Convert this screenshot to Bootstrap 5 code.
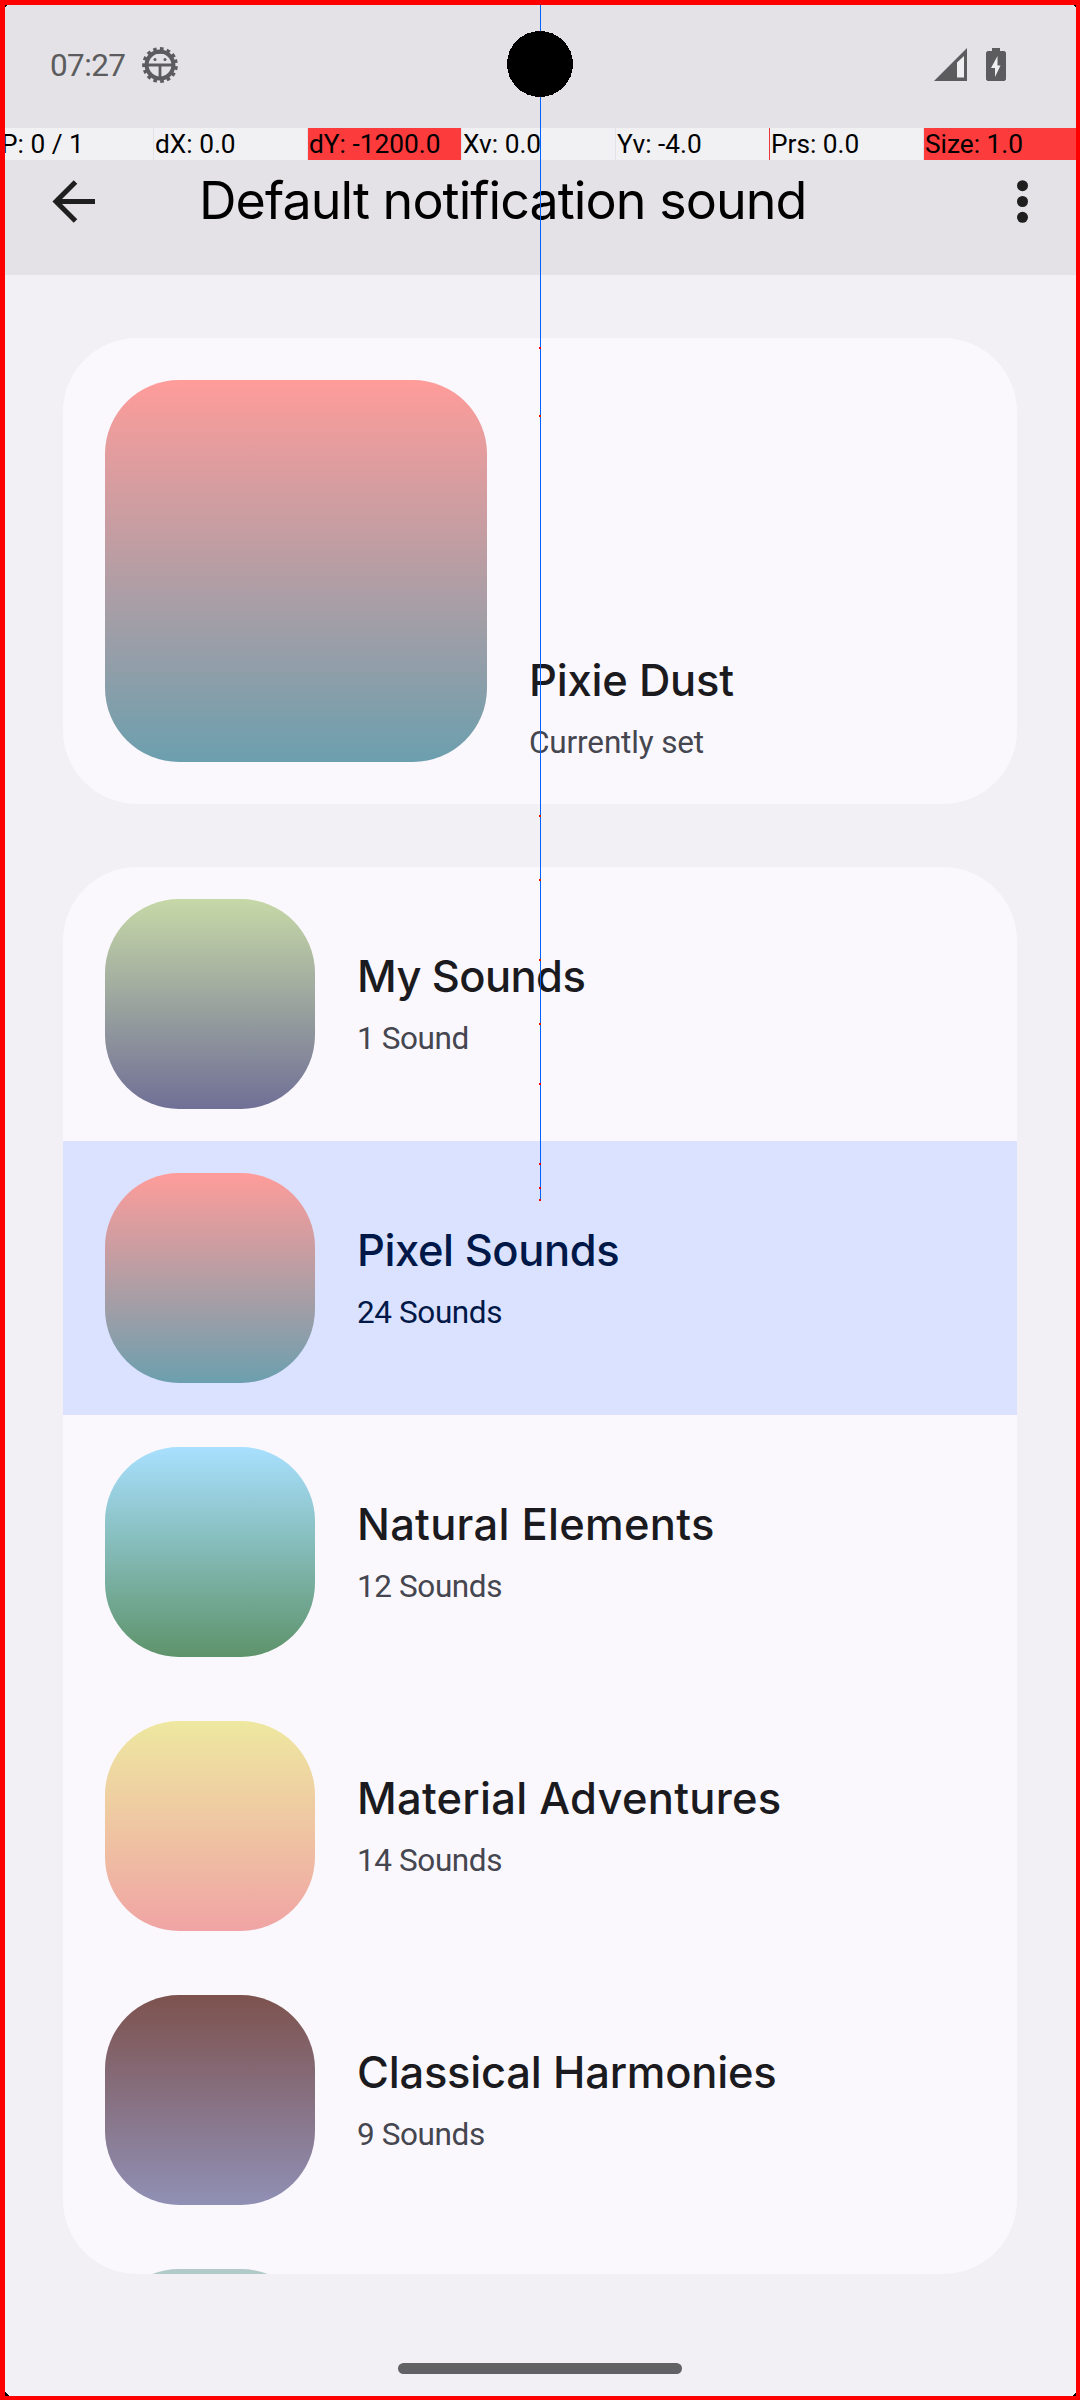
<!DOCTYPE html>
<html lang="en">
<head>
<meta charset="utf-8">
<title>Default notification sound</title>
<link href="https://cdn.jsdelivr.net/npm/bootstrap@5.3.0/dist/css/bootstrap.min.css" rel="stylesheet">
<style>
body{margin:0;background:#f2f0f4;font-family:Roboto,sans-serif;color:#1b1b1f}
.phone{width:1080px;height:2400px;background:#f2f0f4}
.top-area{height:275px;background:#e4e2e6}
.status{height:128px;padding:2px 73px 0 50px;color:#5c5c5e}
.clock{font-size:31.5px;line-height:36px;width:90px;letter-spacing:-.6px;padding-top:1px}
.appbar{height:147px;padding:0 40px 1px 49px}
.page-title{font:400 52px/60px Inter,sans-serif;color:#000;letter-spacing:-.95px;margin-left:100px}
.content-area{padding:63px 63px 0}
.panel{background:#faf8fd;border-radius:74px}
.current{height:466px;padding:42px;gap:42px;margin-bottom:63px}
.current .detail{margin-bottom:-2px;letter-spacing:-.15px}
.library{height:1407px;overflow:hidden}
.sound-row{height:274px;padding:0 42px;gap:42px;flex:none}
.sound-row.selected{background:#dae2ff}
.thumb{width:210px;height:210px;border-radius:74px;flex:none;background:linear-gradient(var(--a),var(--b))}
.thumb.large{width:382px;height:382px}
.name{font:500 43.5px/56px Inter,sans-serif;letter-spacing:-.6px;white-space:nowrap}
.name.snug{letter-spacing:-.43px}
.name.wide{letter-spacing:-.22px}
.name.wider{letter-spacing:.26px}
.detail{font-size:31.5px;line-height:42px;color:#45464f;margin-top:14px;letter-spacing:-.4px}
.selected .name,.selected .detail{color:#001848}
.navhandle{width:284px;height:11px;border-radius:5.5px;background:#626264;margin:89px auto 0}
.pointer-bar{top:128px;left:0;width:1078px;height:32px;gap:1px;z-index:3}
.pointer-bar div{width:153px;flex:none;background:#f1f1f3;font-size:26.25px;line-height:33px;padding-left:1px;color:#000;white-space:nowrap}
.pointer-bar .hot{background:#fc3b3c}
.pointer-bar .edge{box-shadow:-1px 0 #e8383b}
.overlay{z-index:4;pointer-events:none}
.frame{z-index:5;border:solid red;border-width:5px 4px 4px 5px}
</style>
</head>
<body>
<div class="phone position-relative overflow-hidden">
  <header class="top-area">
    <div class="status d-flex align-items-center justify-content-between">
      <div class="d-flex align-items-center">
        <span class="clock">07:27</span>
        <svg width="40" height="40" viewBox="-20 -20 40 40" fill="none" stroke="#5c5c5e">
          <circle r="15.7" stroke-width="4.4" stroke-dasharray="3.5 3.076" transform="rotate(-20)"/>
          <circle r="13.400" stroke-width="4"/>
          <path d="M-12-9Q0-20 12-9Q0-13.500-12-9Z" fill="#5c5c5e" stroke="none"/>
          <path d="M-13 0H13M0 0V14" stroke-width="2.8"/>
          <g fill="#5c5c5e" stroke="none"><circle cx="-5" cy="-5.500" r="1.500"/><circle cx="5" cy="-5.500" r="1.500"/></g>
        </svg>
      </div>
      <svg width="74" height="36" viewBox="933 46 74 36">
        <path d="M934 80L967 47V80Z" fill="#5c5c5e"/><path d="M957 61.500L964 55V76.500H957Z" fill="#efeef1"/>
        <path d="M992 47h8v3h4.500l1.500 1.500v27l-1.500 1.500h-17l-1.500-1.500v-27l1.500-1.500h4.500z" fill="#5c5c5e"/>
        <path d="M997.500 55L991 67H995V76L1000.500 64.500H997.500Z" fill="#efeef1"/>
      </svg>
    </div>
    <div class="appbar d-flex align-items-center">
      <svg width="50" height="50" viewBox="49 176 50 50" fill="none" stroke="#1f1f1f" stroke-width="5"><path d="M95 201.500H57M75.500 182L56 201.500L75.500 221"/></svg>
      <h1 class="page-title mb-0">Default notification sound</h1>
      <svg class="ms-auto" width="36" height="50" viewBox="1004 176 36 50" fill="#1f1f1f"><circle cx="1022.500" cy="185.700" r="5.500"/><circle cx="1022.500" cy="201.500" r="5.500"/><circle cx="1022.500" cy="217.300" r="5.500"/></svg>
    </div>
  </header>
  <main class="content-area">
    <section class="panel current d-flex">
      <div class="thumb large" style="--a:#ff9c9a;--b:#6c9fae"></div>
      <div class="align-self-end"><div class="name wide">Pixie Dust</div><div class="detail">Currently set</div></div>
    </section>
    <section class="panel library d-flex flex-column">
      <div class="sound-row d-flex align-items-center"><div class="thumb" style="--a:#c6d8a7;--b:#706f96"></div><div><div class="name">My Sounds</div><div class="detail">1 Sound</div></div></div>
      <div class="sound-row selected d-flex align-items-center"><div class="thumb" style="--a:#ff9c9a;--b:#6c9fae"></div><div><div class="name snug">Pixel Sounds</div><div class="detail">24 Sounds</div></div></div>
      <div class="sound-row d-flex align-items-center"><div class="thumb" style="--a:#a8e0ff;--b:#5e936b"></div><div><div class="name wider">Natural Elements</div><div class="detail">12 Sounds</div></div></div>
      <div class="sound-row d-flex align-items-center"><div class="thumb" style="--a:#eee8a0;--b:#f0a4a4"></div><div><div class="name wider">Material Adventures</div><div class="detail">14 Sounds</div></div></div>
      <div class="sound-row d-flex align-items-center"><div class="thumb" style="--a:#7d524e;--b:#9090b5"></div><div><div class="name wide">Classical Harmonies</div><div class="detail">9 Sounds</div></div></div>
      <div class="sound-row d-flex align-items-center"><div class="thumb" style="--a:#b2c9c9;--b:#b2c9c9"></div></div>
    </section>
    <div class="navhandle"></div>
  </main>
  <div class="pointer-bar position-absolute d-flex">
    <div>P: 0 / 1</div><div>dX: 0.0</div><div class="hot">dY: -1200.0</div><div>Xv: 0.0</div><div>Yv: -4.0</div><div class="edge">Prs: 0.0</div><div class="hot">Size: 1.0</div>
  </div>
  <svg class="overlay position-absolute top-0 start-0" width="1080" height="2400" shape-rendering="crispEdges">
    <rect x="540" y="5" width="1" height="1195" fill="#0062ff"/>
    <path stroke="red" stroke-width="2" d="M539 348h2M539 416h2M539 816h2M539 880h2M539 960h2M539 1024h2M539 1084h2M539 1164h2M539 1188h2M539 1200h2"/>
    <circle cx="540" cy="64" r="33"/>
    <path d="M5 5h2l-2 2zM1076 5v3l-3-3zM1076 2396h-4l4-4zM5 2396v-4l4 4z"/>
  </svg>
  <div class="frame position-absolute top-0 start-0 w-100 h-100"></div>
</div>
<script src="https://cdn.jsdelivr.net/npm/bootstrap@5.3.0/dist/js/bootstrap.bundle.min.js"></script>
</body>
</html>
